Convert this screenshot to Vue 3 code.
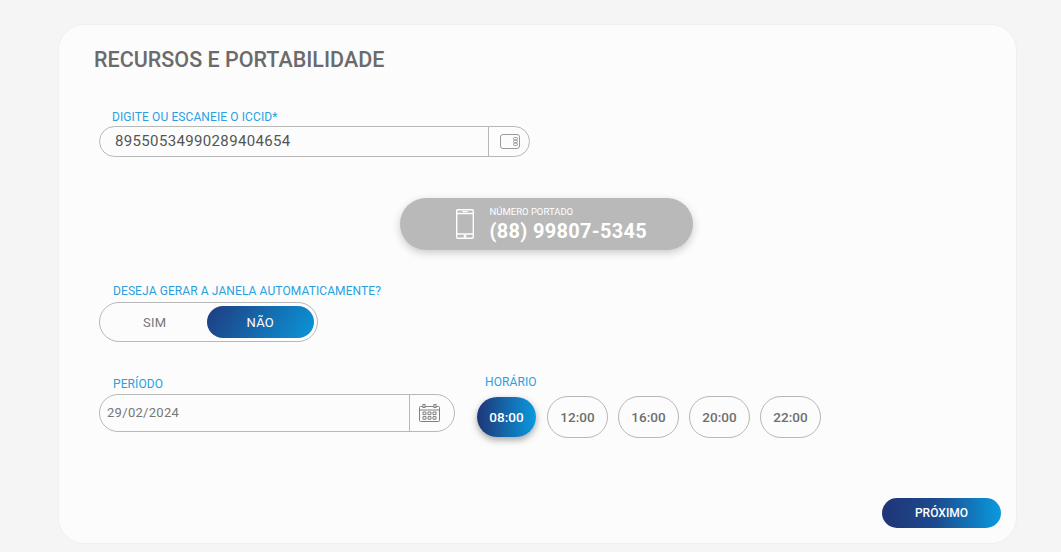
<script setup>
import { ref } from 'vue'

const iccid = ref('8955053499028940465​4'.replace(/\u200b/g, ''))
const auto = ref(false)
const hours = ['08:00', '12:00', '16:00', '20:00', '22:00']
const hour = ref('08:00')
</script>

<template>
  <div class="page">
    <section class="card">
      <h1 class="title">RECURSOS E PORTABILIDADE</h1>

      <div class="iccid">
        <label class="label">DIGITE OU ESCANEIE O ICCID*</label>
        <div class="field field-iccid">
          <span class="field-value">{{ iccid }}</span>
          <span class="field-addon">
            <svg width="20" height="16" viewBox="0 0 20 16" fill="none" stroke="#9a9a9a" stroke-width="1">
              <rect x="0.5" y="0.5" width="19" height="14" rx="2.5" />
              <rect x="13.5" y="3.5" width="4" height="2.4" rx="1.2" />
              <rect x="13.5" y="6.3" width="4" height="2.4" rx="1.2" />
              <rect x="13.5" y="9.1" width="4" height="2.4" rx="1.2" />
            </svg>
          </span>
        </div>
      </div>

      <div class="ported-wrap">
        <div class="ported">
          <svg class="ported-icon" width="18" height="30" viewBox="0 0 18 30" fill="none" stroke="#fff" stroke-width="1.4">
            <rect x="0.7" y="0.7" width="16.6" height="28.6" rx="1.2" />
            <path d="M1 4.5h16M1 25h16" />
            <path d="M6.5 2.6h5" />
            <circle cx="9" cy="27.2" r="0.8" />
          </svg>
          <div>
            <div class="ported-label">NÚMERO PORTADO</div>
            <div class="ported-number">(88) 99807-5345</div>
          </div>
        </div>
      </div>

      <div class="auto">
        <label class="label">DESEJA GERAR A JANELA AUTOMATICAMENTE?</label>
        <div class="toggle">
          <button type="button" class="toggle-opt" :class="{ on: auto }" @click="auto = true">SIM</button>
          <button type="button" class="toggle-opt" :class="{ on: !auto }" @click="auto = false">NÃO</button>
        </div>
      </div>

      <div class="schedule">
        <div class="period">
          <label class="label">PERÍODO</label>
          <div class="field field-date">
            <span class="date-value">29/02/2024</span>
            <span class="field-addon addon-date">
              <svg width="21" height="18" viewBox="0 0 21 18" fill="none" stroke="#808080" stroke-width="1">
                <rect x="0.5" y="2.5" width="20" height="15" rx="1" />
                <path d="M0.5 6h20" />
                <rect x="4" y="0.5" width="2" height="3" fill="#fcfcfc" />
                <rect x="15" y="0.5" width="2" height="3" fill="#fcfcfc" />
                <path d="M4 8h3v2.6H4zM9 8h3v2.6H9zM14 8h3v2.6h-3zM4 12.6h3v2.6H4zM9 12.6h3v2.6H9zM14 12.6h3v2.6h-3z" />
              </svg>
            </span>
          </div>
        </div>

        <div class="hours">
          <label class="label hours-label">HORÁRIO</label>
          <div class="hour-list">
            <button
              v-for="h in hours"
              :key="h"
              type="button"
              class="hour"
              :class="{ active: h === hour }"
              @click="hour = h"
            >{{ h }}</button>
          </div>
        </div>
      </div>

      <div class="footer">
        <button type="button" class="next">PRÓXIMO</button>
      </div>
    </section>
  </div>
</template>

<style>
html, body {
  background: #f5f5f5;
  overflow: hidden;
}
</style>

<style scoped>
.page {
  padding: 24px 44px 6px 58px;
  font-family: Roboto, "Noto Sans", sans-serif;
  color: #6f6f6f;
}

.card {
  height: 520px;
  box-sizing: border-box;
  display: flex;
  flex-direction: column;
  padding: 22px 15px 15px 35px;
  background: #fcfcfc;
  border: 1px solid #efefef;
  border-radius: 26px;
}

.title {
  margin: 0;
  font-size: 21.5px;
  line-height: 26px;
  font-weight: 500;
  color: #6b6b6b;
}

.label {
  display: block;
  font-size: 12px;
  line-height: 14px;
  color: #2a9fe0;
  letter-spacing: 0.1px;
}

.iccid {
  margin: 37px 0 0 5px;
  width: 431px;
}

.iccid .label {
  padding-left: 13px;
  margin-bottom: 2px;
}

.field {
  display: flex;
  align-items: stretch;
  box-sizing: border-box;
  border: 1px solid #b8b8b8;
  border-radius: 20px;
}

.field-iccid {
  height: 31px;
}

.field-value {
  flex: 1;
  padding-left: 15px;
  font-size: 15px;
  line-height: 29px;
  letter-spacing: 0.35px;
  color: #555;
}

.field-addon {
  width: 41px;
  display: flex;
  align-items: center;
  justify-content: center;
  padding-left: 2px;
  box-sizing: border-box;
  border-left: 1px solid #b8b8b8;
}

.ported-wrap {
  display: flex;
  justify-content: center;
  margin-top: 41px;
  padding-right: 3px;
}

.ported {
  width: 293px;
  height: 52px;
  box-sizing: border-box;
  display: flex;
  align-items: center;
  gap: 16px;
  padding-left: 56px;
  color: #fff;
  background: #b9b9b9;
  border-radius: 26px;
  box-shadow: 0 3px 8px rgba(0, 0, 0, 0.2);
}

.ported-icon {
  flex: none;
}

.ported-label {
  font-size: 9.5px;
  line-height: 11px;
}

.ported-number {
  margin-top: 3px;
  font-size: 20px;
  line-height: 23px;
  font-weight: 700;
  letter-spacing: 0.3px;
}

.auto {
  margin: 34px 0 0 5px;
}

.auto .label {
  padding-left: 14px;
  margin-bottom: 4px;
}

.toggle {
  width: 219px;
  height: 40px;
  box-sizing: border-box;
  display: flex;
  padding: 3px;
  border: 1px solid #b8b8b8;
  border-radius: 20px;
}

.toggle-opt {
  width: 106px;
  border: 0;
  padding: 0;
  background: none;
  font: inherit;
  font-size: 13px;
  letter-spacing: 0.3px;
  color: #777;
  border-radius: 16px;
}

.toggle-opt.on {
  width: 110px;
  color: #fff;
  background: linear-gradient(120deg, #1f3c80 0%, #0a96d8 100%);
}

.schedule {
  display: flex;
  align-items: flex-start;
  margin: 35px 0 0 5px;
}

.period {
  width: 356px;
}

.period .label {
  padding-left: 14px;
  margin-bottom: 3px;
}

.field-date {
  height: 38px;
}

.date-value {
  flex: 1;
  padding-left: 7px;
  font-size: 13px;
  line-height: 36px;
  letter-spacing: 0.3px;
  color: #777;
}

.addon-date {
  width: 45px;
  padding: 0 6px 0 0;
}

.hours {
  margin: -2px 0 0 22px;
}

.hours-label {
  padding-left: 8px;
  margin-bottom: 7px;
}

.hour-list {
  display: flex;
  align-items: center;
  gap: 10px;
}

.hour {
  width: 61px;
  height: 42px;
  border: 1px solid #b8b8b8;
  border-radius: 21px;
  padding: 0;
  background: none;
  font: inherit;
  font-size: 13.5px;
  font-weight: 500;
  color: #6f6f6f;
}

.hour.active {
  width: 59px;
  height: 40px;
  margin-right: 1px;
  border: 0;
  color: #fff;
  background: linear-gradient(90deg, #1f3577 0%, #0a9ade 100%);
  box-shadow: 0 3px 7px rgba(0, 0, 0, 0.35);
}

.footer {
  margin-top: auto;
  display: flex;
  justify-content: flex-end;
}

.next {
  width: 119px;
  height: 30px;
  border: 0;
  border-radius: 15px;
  padding: 0;
  font: inherit;
  font-size: 12px;
  font-weight: 500;
  color: #fff;
  background: linear-gradient(90deg, #1f3577 0%, #1c4a8e 45%, #0a9ade 100%);
}
</style>
